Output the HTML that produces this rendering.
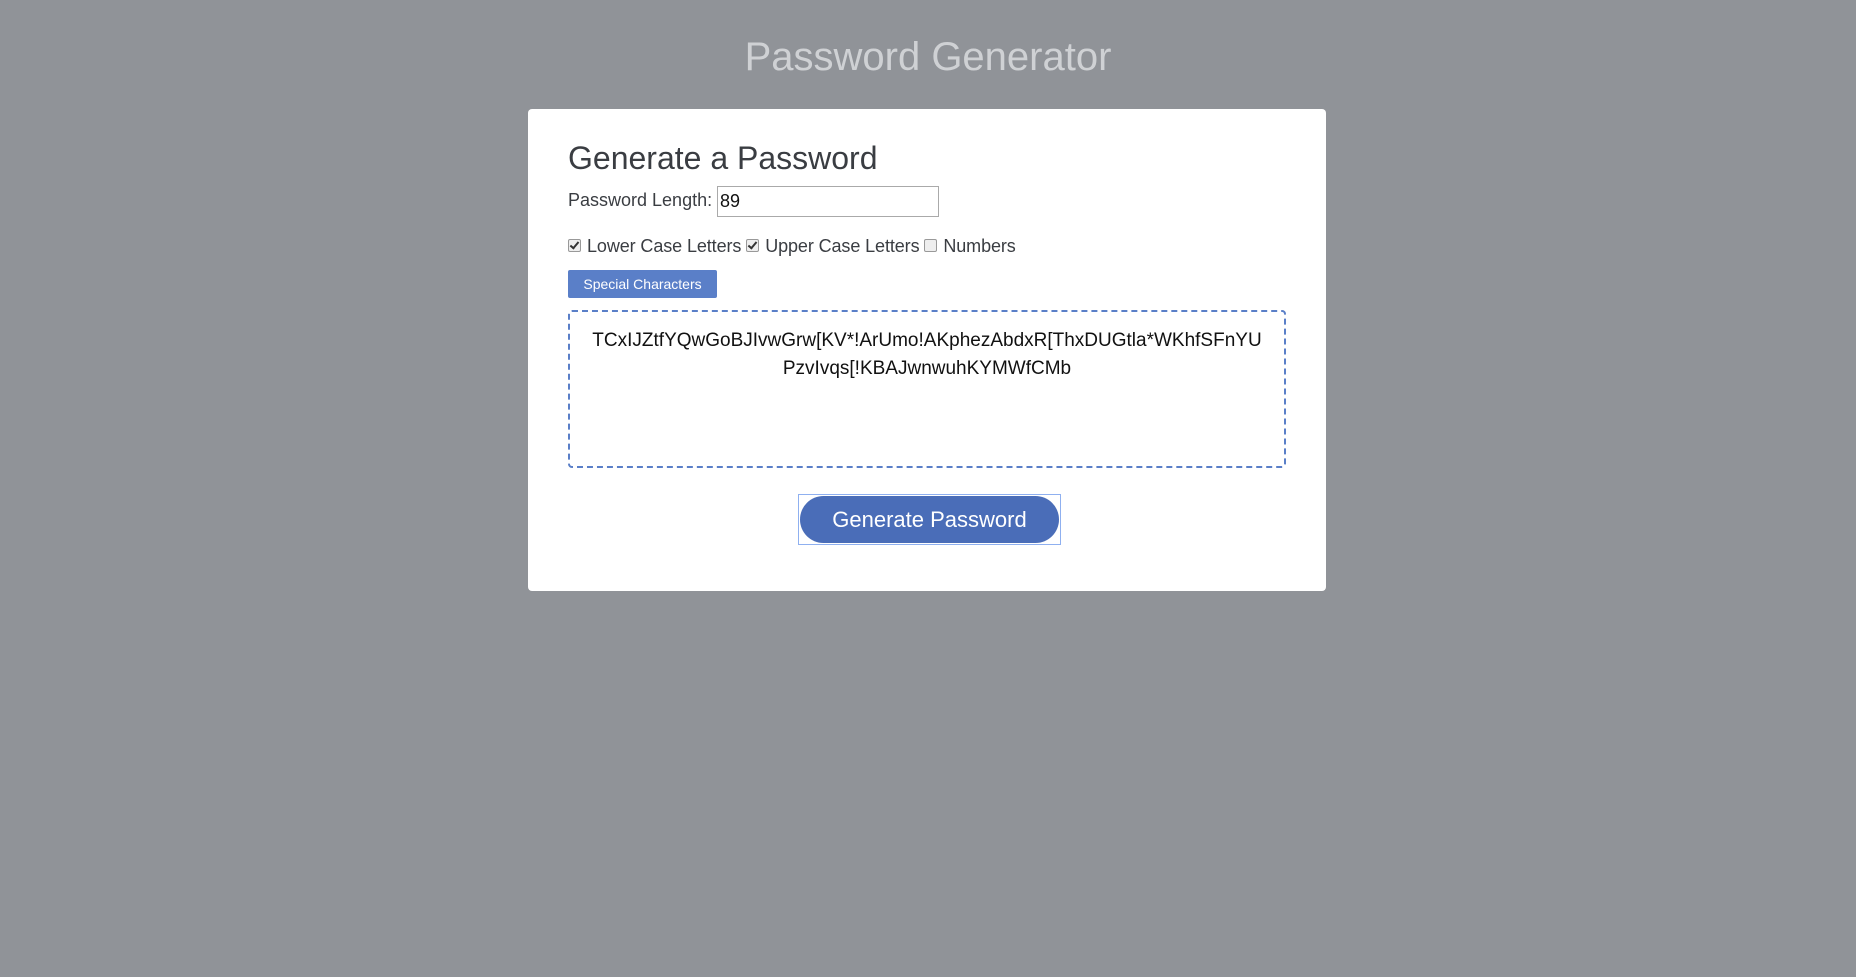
<!DOCTYPE html>
<html><head><style>
html,body{margin:0;padding:0}
body{width:1856px;height:977px;background:#909398;font-family:"Liberation Sans",Arial,sans-serif;position:relative;overflow:hidden}
h1{position:absolute;top:35px;left:0;width:1856px;text-align:center;margin:0;font-weight:400;font-size:40px;color:#cfd1d4}
.card{position:absolute;left:528px;top:109px;width:798px;height:482px;background:#fff;border-radius:4px}
.h2{position:absolute;left:40px;top:31px;font-size:32px;color:#3a3d42}
.lbl{position:absolute;left:40px;top:81px;font-size:18px;color:#3a3d42}
.inp{position:absolute;left:189px;top:77px;width:222px;height:31px;border:1px solid #aaa;box-sizing:border-box;font-size:18px;padding:4px 2px;color:#111}
.row{position:absolute;left:40px;top:127px;font-size:18px;color:#3a3d42;letter-spacing:-0.1px}
.cb{display:inline-block;width:11px;height:11px;border:1px solid #999;border-radius:2px;background:#eee;vertical-align:0px;position:relative;margin-right:6px}
.cb.on::after{content:"";position:absolute;left:3px;top:0;width:3px;height:7px;border:solid #333;border-width:0 2px 2px 0;transform:rotate(40deg)}
.sc{position:absolute;left:40px;top:161px;width:149px;height:28px;background:#5a7fc8;color:#fff;font-size:14px;text-align:center;line-height:28px;border-radius:2px}
.box{position:absolute;left:40px;top:201px;width:718px;height:158px;border:2px dashed #5a7fc8;box-sizing:border-box;border-radius:4px;text-align:center;font-size:19px;line-height:28px;padding-top:15px;color:#111}
.gbw{position:absolute;left:270px;top:385px;width:263px;height:51px;border:1px solid #8fb0f0;box-sizing:border-box}
.gb{position:absolute;left:1px;top:1px;right:1px;bottom:1px;background:#4a6db8;border-radius:25px;color:#fff;font-size:22px;text-align:center;line-height:47px}
</style></head><body>
<h1>Password Generator</h1>
<div class="card">
<div class="h2">Generate a Password</div>
<div class="lbl">Password Length:</div>
<div class="inp">89</div>
<div class="row"><span class="cb on"></span>Lower Case Letters <span class="cb on"></span>Upper Case Letters <span class="cb"></span>Numbers</div>
<div class="sc">Special Characters</div>
<div class="box">TCxIJZtfYQwGoBJIvwGrw[KV*!ArUmo!AKphezAbdxR[ThxDUGtla*WKhfSFnYU<br>PzvIvqs[!KBAJwnwuhKYMWfCMb</div>
<div class="gbw"><div class="gb">Generate Password</div></div>
</div>
</body></html>
